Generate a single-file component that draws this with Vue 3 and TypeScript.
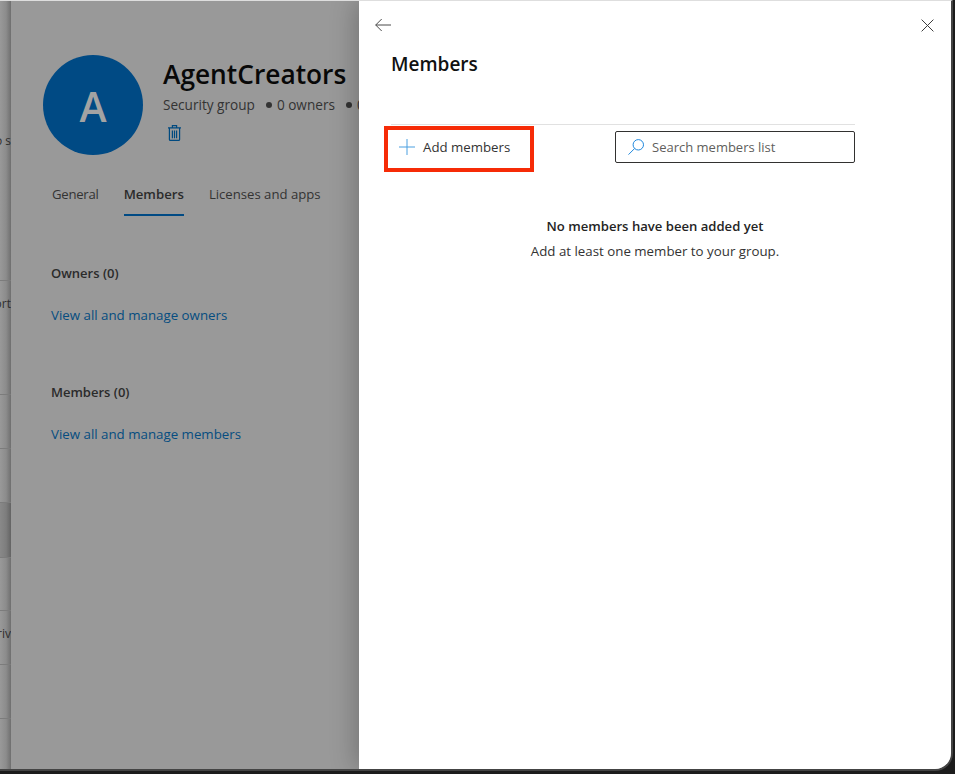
<script setup lang="ts">
type StripRow = { id: number; label?: string; active?: boolean };

const stripRows: StripRow[] = [
  { id: 1, label: 'o s' },
  { id: 2, label: 'ort' },
  { id: 3 },
  { id: 4 },
  { id: 5, active: true },
  { id: 6 },
  { id: 7, label: 'riv' },
  { id: 8 },
];

const tabs = ['General', 'Members', 'Licenses and apps'];
</script>

<template>
  <div class="screen">
    <div class="frame">
      <div class="strip">
        <div
          v-for="row in stripRows"
          :key="row.id"
          :class="['strip-row', `strip-row-${row.id}`, { 'strip-row-active': row.active }]"
        >
          <span v-if="row.label">{{ row.label }}</span>
        </div>
      </div>

      <section class="group">
        <header class="group-head">
          <div class="avatar">A</div>
          <div class="group-info">
            <h1>AgentCreators</h1>
            <p class="group-meta">
              <span>Security group</span>
              <span class="dot"></span>
              <span>0 owners</span>
              <span class="dot"></span>
              <span>0 members</span>
            </p>
            <svg class="trash" width="13" height="16" viewBox="0 0 13 16" fill="none" stroke="#004a80" stroke-width="1.2">
              <path d="M0 2.9h13M1.4 2.9v11.5a1 1 0 0 0 1 1h8.2a1 1 0 0 0 1-1V2.9M4.4 2.9V.6h4.2v2.3M4.4 5.4v7.8M6.5 5.4v7.8M8.6 5.4v7.8" />
            </svg>
          </div>
        </header>

        <nav class="tabs">
          <span v-for="tab in tabs" :key="tab" :class="['tab', { 'tab-active': tab === 'Members' }]">{{ tab }}</span>
        </nav>

        <div class="block block-owners">
          <h2>Owners (0)</h2>
          <a>View all and manage owners</a>
        </div>
        <div class="block block-members">
          <h2>Members (0)</h2>
          <a>View all and manage members</a>
        </div>
      </section>

      <aside class="drawer">
        <div class="drawer-top">
          <svg width="16" height="14" viewBox="0 0 16 14" fill="none" stroke="#4a4a4a" stroke-width="1">
            <path d="M16 7H.7M6.7 1 .7 7l6 6" />
          </svg>
          <svg width="13" height="13" viewBox="0 0 13 13" fill="none" stroke="#3c3c3c" stroke-width="1">
            <path d="M.6.6l11.8 11.8M12.4.6.6 12.4" />
          </svg>
        </div>
        <h2 class="drawer-title">Members</h2>
        <div class="toolbar">
          <button class="add-button" type="button">
            <svg width="16" height="16" viewBox="0 0 16 16" fill="none" stroke="#4a9fe0" stroke-width="1">
              <path d="M8 0v16M0 8h16" />
            </svg>
            <span>Add members</span>
          </button>
          <div class="search">
            <svg width="16" height="16" viewBox="0 0 16 16" fill="none" stroke="#1f87dc" stroke-width="1">
              <circle cx="10.3" cy="5.8" r="5.2" />
              <path d="M6.6 9.5.5 15.6" />
            </svg>
            <span>Search members list</span>
          </div>
        </div>
        <div class="empty">
          <strong>No members have been added yet</strong>
          <p>Add at least one member to your group.</p>
        </div>
      </aside>
    </div>
  </div>
</template>

<style scoped>
.screen {
  width: 955px;
  height: 774px;
  background: #1c1c1c;
  overflow: hidden;
  font-family: "Open Sans", "Noto Sans", sans-serif;
}

.frame {
  display: flex;
  height: 771px;
  border-top: 1px solid #dedede;
  border-right: 2px solid #444;
  border-bottom: 2px solid #444;
  box-sizing: border-box;
  background: #999;
  border-bottom-right-radius: 18px;
  margin-right: 2px;
  overflow: hidden;
}

.strip {
  width: 11px;
  flex: none;
  background: linear-gradient(90deg, #999 0, #8c8c8c 55%, #6f6f6f 100%);
  overflow: hidden;
  display: flex;
  flex-direction: column;
  align-items: stretch;
}

.strip-row {
  display: flex;
  justify-content: flex-end;
  align-items: center;
  box-sizing: border-box;
  border-bottom: 1px solid #7c7c7c;
  font-size: 12px;
  color: #2e2e2e;
  white-space: nowrap;
}

.strip-row-1 { height: 280px; }
.strip-row-2 { height: 114px; padding-bottom: 68px; }
.strip-row-3 { height: 54px; }
.strip-row-4 { height: 54px; }
.strip-row-5 { height: 55px; background: rgba(0, 0, 0, 0.1); }
.strip-row-6 { height: 53px; }
.strip-row-7 { height: 54px; padding-bottom: 9px; }
.strip-row-8 { height: 54px; }

.group {
  width: 348px;
  flex: none;
  box-sizing: border-box;
  padding: 54px 0 0 32px;
  overflow: hidden;
  background: #999;
}

.group-head {
  display: flex;
  gap: 20px;
  height: 100px;
}

.avatar {
  width: 100px;
  height: 100px;
  flex: none;
  border-radius: 50%;
  background: #004a84;
  color: #a3a3a3;
  font-size: 41px;
  font-weight: 600;
  line-height: 103px;
  text-align: center;
}

.group-info {
  white-space: nowrap;
}

.group-info h1 {
  margin: 0;
  font-size: 26.3px;
  line-height: 38px;
  font-weight: 600;
  color: #080808;
}

.group-meta {
  display: flex;
  align-items: center;
  margin: 2px 0 0;
  font-size: 13.6px;
  line-height: 20px;
  color: #333;
}

.dot {
  width: 6px;
  height: 6px;
  border-radius: 50%;
  background: #333;
  margin: 0 5px 0 11px;
}

.trash {
  display: block;
  margin: 10px 0 0 5px;
}

.tabs {
  display: flex;
  gap: 25px;
  margin: 26px 0 0 9px;
  font-size: 13.15px;
  color: #333;
}

.tab {
  height: 35px;
  line-height: 26px;
  box-sizing: border-box;
  white-space: nowrap;
}

.tab:first-child {
  letter-spacing: -0.25px;
}

.tab-active {
  font-size: 13.2px;
  font-weight: 600;
  border-bottom: 2px solid #004a84;
  color: #2b2b2b;
}

.block {
  margin-left: 8px;
  font-size: 13.3px;
  white-space: nowrap;
}

.block h2 {
  margin: 0;
  font-size: 13px;
  line-height: 18px;
  font-weight: 600;
  color: #2b2b2b;
}

.block a {
  display: block;
  margin-top: 24px;
  line-height: 18px;
  color: #064d80;
}

.block-owners { margin-top: 48px; }
.block-members { margin-top: 59px; }

.drawer {
  flex: 1;
  position: relative;
  background: #fff;
  box-shadow: -4px 0 24px rgba(0, 0, 0, 0.24);
  box-sizing: border-box;
  padding: 0 96px 0 32px;
}

.drawer-top {
  display: flex;
  justify-content: space-between;
  align-items: center;
  height: 14px;
  margin: 17px -79px 0 -16px;
}

.drawer-title {
  margin: 19px 0 0;
  font-size: 19px;
  line-height: 26px;
  font-weight: 600;
  color: #111;
}

.toolbar {
  display: flex;
  justify-content: space-between;
  align-items: flex-start;
  margin-top: 47px;
  padding-top: 1px;
  border-top: 1px solid #e1e1e1;
}

.add-button {
  display: flex;
  align-items: center;
  gap: 8px;
  width: 150px;
  height: 46px;
  margin-left: -7px;
  padding: 0 0 4px 11px;
  box-sizing: border-box;
  border: 4px solid #f62b07;
  background: none;
  font: inherit;
  font-size: 13.25px;
  color: #333;
}

.search {
  display: flex;
  align-items: center;
  gap: 8px;
  width: 240px;
  height: 32px;
  margin-top: 5px;
  padding-left: 12px;
  box-sizing: border-box;
  border: 1px solid #323130;
  border-radius: 2px;
  font-size: 13px;
  color: #605e5c;
}

.empty {
  margin: 45px -64px 0 0;
  text-align: center;
  font-size: 13.3px;
  color: #333;
}

.empty strong {
  display: block;
  font-size: 13.1px;
  font-weight: 600;
  line-height: 18px;
  color: #242424;
}

.empty p {
  margin: 7px 0 0;
  line-height: 18px;
}
</style>
